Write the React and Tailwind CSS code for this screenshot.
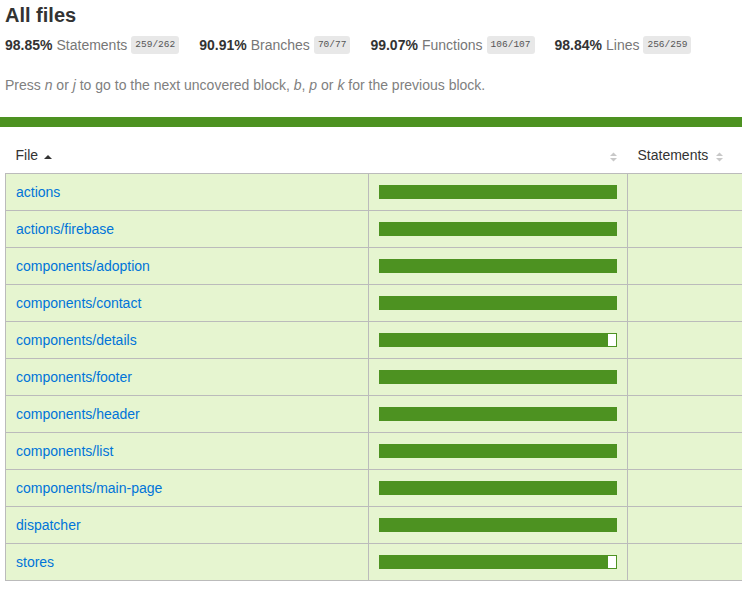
import React from "react";

const stats = [
  { pct: "98.85%", label: "Statements", frac: "259/262" },
  { pct: "90.91%", label: "Branches", frac: "70/77" },
  { pct: "99.07%", label: "Functions", frac: "106/107" },
  { pct: "98.84%", label: "Lines", frac: "256/259" },
];

const rows = [
  { name: "actions", pct: 100 },
  { name: "actions/firebase", pct: 100 },
  { name: "components/adoption", pct: 100 },
  { name: "components/contact", pct: 100 },
  { name: "components/details", pct: 96 },
  { name: "components/footer", pct: 100 },
  { name: "components/header", pct: 100 },
  { name: "components/list", pct: 100 },
  { name: "components/main-page", pct: 100 },
  { name: "dispatcher", pct: 100 },
  { name: "stores", pct: 96 },
];

function SortIcon({ dir }) {
  if (dir === "up") {
    return (
      <svg width="8" height="6" viewBox="0 0 8 6" className="inline-block ml-[6px] align-middle">
        <path d="M0 5 L4 1 L8 5 Z" fill="#333" />
      </svg>
    );
  }
  return (
    <svg width="9" height="12" viewBox="0 0 9 12" className="inline-block align-middle">
      <path d="M1 5 L4.5 1.5 L8 5 Z" fill="#c8c8c8" />
      <path d="M1 7 L4.5 10.5 L8 7 Z" fill="#c8c8c8" />
    </svg>
  );
}

function Bar({ pct }) {
  const total = 238;
  const fill = Math.round((total * pct) / 100);
  return (
    <div className="flex h-[14px] w-[238px]">
      <div className="h-full bg-[#4d9221]" style={{ width: fill }} />
      {fill < total && (
        <div className="h-full bg-white border border-[#4d9221]" style={{ width: total - fill }} />
      )}
    </div>
  );
}

export default function App() {
  return (
    <div className="w-[742px] h-[612px] overflow-hidden bg-white text-[14px] text-[#333] font-['Liberation_Sans',Arial,sans-serif]">
      <div className="px-[5px] pt-[3px]">
        <h1 className="text-[20px] font-bold leading-[24px] m-0">All files</h1>
        <div className="flex items-center mt-[9px] h-[18px]">
          {stats.map((s) => (
            <div key={s.label} className="flex items-center mr-[20px]">
              <span className="font-bold">{s.pct}</span>
              <span className="ml-[4px] text-[#777]">{s.label}</span>
              <span className="ml-[4px] bg-[#e8e8e8] text-[#555] rounded-[3px] px-[4px] h-[18px] leading-[18px] text-[9.5px] font-['Liberation_Mono',monospace]">
                {s.frac}
              </span>
            </div>
          ))}
        </div>
        <p className="mt-[22px] text-[#808080] leading-[18px]">
          Press <em>n</em> or <em>j</em> to go to the next uncovered block, <em>b</em>, <em>p</em> or <em>k</em> for the previous block.
        </p>
      </div>
      <div className="mt-[23px] h-[10px] bg-[#4d9221]" />
      <table className="ml-[5px] mt-[13px] border-collapse table-fixed w-[900px]">
        <colgroup>
          <col className="w-[363px]" />
          <col className="w-[259px]" />
          <col className="w-[150px]" />
          <col />
        </colgroup>
        <thead>
          <tr className="h-[33px]">
            <th className="text-left font-normal px-[10px] pb-[1px] align-middle">
              File
              <SortIcon dir="up" />
            </th>
            <th className="text-right font-normal px-[10px] align-middle">
              <SortIcon dir="both" />
            </th>
            <th className="text-left font-normal px-[10px] pb-[1px] align-middle whitespace-nowrap">
              Statements <span className="ml-[3px]"><SortIcon dir="both" /></span>
            </th>
            <th />
          </tr>
        </thead>
        <tbody>
          {rows.map((r) => (
            <tr key={r.name} className="h-[37px] bg-[#e6f5d0]">
              <td className="border border-[#bbb] px-[10px] pt-[2px] align-middle">
                <a className="text-[#0074d9]">{r.name}</a>
              </td>
              <td className="border border-[#bbb] px-[10px] align-middle">
                <Bar pct={r.pct} />
              </td>
              <td className="border border-[#bbb] px-[10px]" />
              <td className="border border-[#bbb] px-[10px]" />
            </tr>
          ))}
        </tbody>
      </table>
    </div>
  );
}
